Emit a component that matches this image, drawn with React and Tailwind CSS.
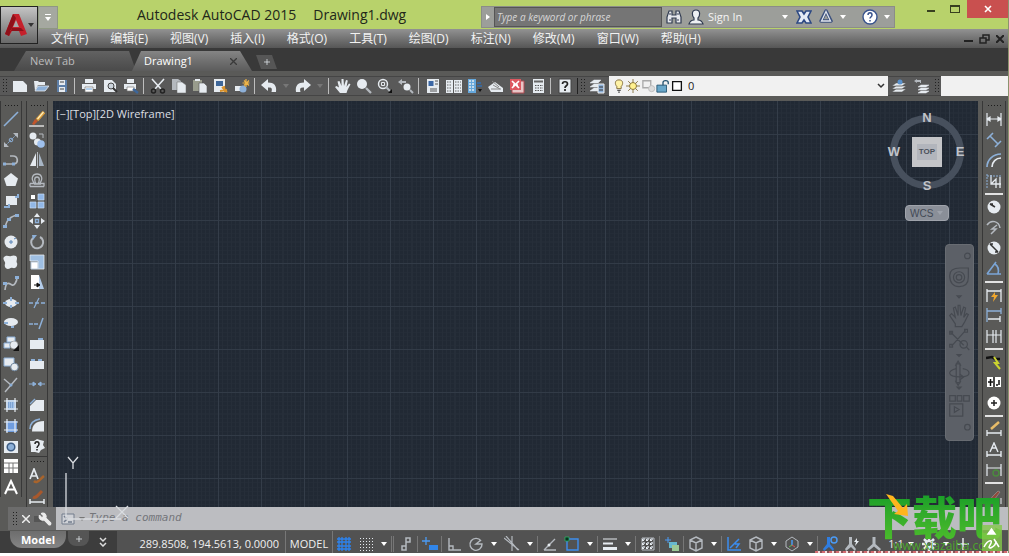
import { useState } from "react"
import { Wrench } from "lucide-react"

const W = "#e6ebf0"
const B = "#8db0d8"
const G = "#b4b9bf"

// drawings on a 16x16 grid
const art = {
  newFile: <path d="M1 3h10l4 4v7H1z" fill={W} />,
  open: <><path d="M1 3h4l1 1h6v3H5l-3 6z" fill={W} /><path d="M5 8h11l-4 5H2z" fill={B} stroke={W} strokeWidth=".8" /></>,
  save: <><path d="M3 2h10v12H3z" fill="#5e7fa8" /><path d="M5 2h6v5H5zM5 9h6v5H5z" fill={W} /><path d="M6 4h4M6 11h4" stroke="#444" /></>,
  print: <><path d="M4 1h8v4H4zM1 6h14v5H1z" fill={W} /><path d="M4 9h8v5H4z" fill="#fff" stroke="#777" strokeWidth=".7" /><path d="M5 11h6" stroke="#67a0d8" /></>,
  preview: <><path d="M2 2h8l4 4v8H2z" fill={W} /><circle cx="9" cy="8" r="3" fill="#ccd4dc" stroke="#444" /><path d="M11 10l4 4" stroke="#333" strokeWidth="2" /></>,
  plot: <><path d="M4 1h7v4H4zM1 6h12v5H1z" fill={W} /><path d="M4 9h7v4H4z" fill="#fff" stroke="#777" strokeWidth=".7" /><path d="M10 11l5 4" stroke="#3d6699" strokeWidth="2.500" /></>,
  cut: <g fill="none"><path d="M2 1l9 10M14 1L5 11" stroke={W} strokeWidth="1.600" /><circle cx="3.500" cy="13" r="2" stroke="#222" strokeWidth="1.500" /><circle cx="12.500" cy="13" r="2" stroke="#222" strokeWidth="1.500" /></g>,
  copy: <><path d="M1 1h6l3 2v9H1z" fill={G} /><path d="M6 4h5l4 3v8H6z" fill={W} stroke="#666" strokeWidth=".5" /></>,
  paste: <><path d="M1 2h9v11H1z" fill="#999c8d" /><path d="M3 1h5v2H3z" fill={W} /><path d="M7 5h5l3 3v7H7z" fill={W} stroke="#555" strokeWidth=".6" /></>,
  match: <><path d="M1 1h11v13H1z" fill={W} /><path d="M3 3h7v5H3z" fill="#3d6699" /><path d="M9 9l5 5M7 13l7-1M11 8l1 6" stroke="#d8922c" strokeWidth="1.800" /></>,
  block: <><path d="M1 8h7v5H1z" fill={W} /><circle cx="9" cy="11" r="3.500" fill={B} /><path d="M12 1v8M8.500 5h7M10 2.500l5 5M15 2.500l-5 5" stroke="#edb347" strokeWidth="1.200" /></>,
  undo: <path d="M0 7l7-6v3.500c6 0 9 3 8 9.500h-4.500c1-4 0-4.500-3.500-4.500V13z" fill={W} />,
  redo: <path d="M16 7L9 1v3.500c-6 0-9 3-8 9.500h4.500c-1-4 0-4.500 3.500-4.500V13z" fill={W} />,
  hand: <path d="M5 15L0 9l1.500-1L4 9.500 2.500 3.500 4.500 3 6.500 8 6.500 1h2L9 8l2-6 1.800.5L11.500 9 14 5.500l1.500.8L12.500 12l-1 3z" fill={W} />,
  zoom: <><circle cx="6" cy="6" r="5" fill={W} /><path d="M10 10l5 5" stroke={G} strokeWidth="2.300" /></>,
  zoomWin: <><circle cx="6" cy="6" r="4.500" fill="#666" stroke={W} strokeWidth="1.400" /><path d="M4.500 4.500h3v3h-3z" fill="none" stroke={W} /><path d="M9 9l4 4" stroke={G} strokeWidth="2" /><path d="M11 15h4v-4z" fill="#111" /></>,
  zoomPrev: <><path d="M0 4l4-3v2h4v2H4v2z" fill={G} /><circle cx="9" cy="9" r="3.500" fill={W} /><path d="M12 12l3 3" stroke={G} strokeWidth="2" /></>,
  props: <><path d="M2 1h12v14H2z" fill={W} /><path d="M3.500 3h5v5h-5z" fill="#3b67a5" /><path d="M10 3h3M10 6h3M5 11h7M5 13h7" stroke="#555" /></>,
  design: <><path d="M0 2h7v13H0zM8 2h8v13H8z" fill={W} /><path d="M1 4h5M1 7h5M1 10h5M9 4h6M9 7h6M9 10h6M1 13h5M9 13h6" stroke="#666" strokeDasharray="1.500 1" /></>,
  palettes: <><path d="M1 1h8v14H1z" fill="#66a8dc" /><path d="M2 3h6M2 6h6M2 9h6M2 12h6" stroke={W} strokeDasharray="2 1" strokeWidth="1.500" /><path d="M10 5h4M10 8h5" stroke="#3c6899" strokeWidth="2" /><path d="M11 11h4l-2 3z" fill="#111" /></>,
  sheet: <><path d="M0 9l7-5 8 6v4H3z" fill={W} /><path d="M3 11h10M5 7l7 4M4 3l7 6" stroke="#888" /></>,
  markup: <><path d="M3 3h12v12H3z" fill="#e8c7c8" stroke="#b04a50" /><path d="M1 1h11v11H1z" fill="#dd5860" /><path d="M3 3l7 7M10 3l-7 7M4 7h5" stroke="#fff" strokeWidth="1.700" /></>,
  calc: <><path d="M3 1h11v14H3z" fill={W} /><path d="M4 3.500h9" stroke="#666" strokeWidth="2" /><path d="M5 7.500h8M5 10h8M5 12.500h8" stroke="#555" strokeDasharray="1.500 1" /></>,
  help: <><path d="M2 1h12v14H2z" fill={W} stroke="#444" /><path d="M5.500 6c0-3 5-3 5 0 0 2-2.500 1.500-2.500 4M8 11v2" stroke="#222" strokeWidth="1.700" fill="none" /></>,
  layers: <><path d="M1 5l4-3h7l-3 3zM1 9l4-3h4v3zM1 13l4-3h4v3z" fill={W} stroke={W} strokeWidth=".5" /><path d="M9 6h6v9H9z" fill={B} stroke="#eee" /><path d="M10 9h4M10 12h4" stroke="#333" /></>,
  layerState: <><path d="M1 14l4-3h10l-4 3zM1 11l4-3h10l-4 3zM1 8l4-3h10l-4 3z" fill={W} stroke="#555" strokeWidth=".5" /><circle cx="9" cy="4" r="2.500" fill="#5b92cc" /></>,
  layerPrev: <><path d="M5 15l3-2h8l-3 2zM5 12l3-2h8l-3 2zM5 9l3-2h8l-3 2z" fill={W} stroke={W} strokeWidth=".5" /><path d="M1 3l3-2v1h4v3H7V4H4v1z" fill={G} /></>,
  bulb: <><path d="M8 1c-5 0-5 5-2.500 7.500V11h5V8.500C13 6 13 1 8 1z" fill="#fff3a7" stroke="#77612c" /><path d="M6 13h4M7 15h2" stroke="#555" strokeWidth="1.500" /></>,
  sun: <><path d="M8 0v16M0 8h16M2.500 2.500l11 11M13.500 2.500l-11 11" stroke="#806c35" /><circle cx="8" cy="8" r="4" fill="#fff08e" stroke="#806c35" /></>,
  vp: <><path d="M1 2h9v8H1z" fill="none" stroke="#aaa" strokeWidth="1.500" /><circle cx="11" cy="11" r="3.500" fill="#ddd" stroke="#bbb" /></>,
  lock: <><path d="M1 7h11v8H1z" fill="#69a7c9" stroke="#24536f" /><path d="M8 7V4c0-3 6-3 6 0v2" fill="none" stroke="#24536f" strokeWidth="1.500" /></>,
  swatch: <path d="M3 3h10v10H3z" fill="#fff" stroke="#111" strokeWidth="1.500" />,

  line: <path d="M1 15L15 1" stroke={B} strokeWidth="1.600" />,
  xline: <><path d="M3 13L13 3" stroke={B} strokeDasharray="2 1" /><path d="M1 15v-5l5 5zM15 1v5l-5-5z" fill={G} /><circle cx="8" cy="8" r="1.800" fill="none" stroke={B} /></>,
  pline: <><path d="M2 12h9c5-1 4-8-1-8H7" fill="none" stroke={G} strokeWidth="1.700" /><path d="M0 10.500h3v3H0zM9 10.500h3v3H9z" fill={B} /></>,
  polygon: <path d="M8 1l7 5.500L12.500 14h-9L1 6.500z" fill={W} />,
  rect: <><path d="M3 3h11v9H3z" fill={W} /><path d="M1 14h5v-3M12 4h3V1" stroke={B} strokeWidth="2" fill="none" /></>,
  arc: <><path d="M2 15C3 8 7 3 15 2" fill="none" stroke={G} strokeWidth="1.500" /><path d="M0 12h4v3H0zM12 1h4v3h-4zM4 5h4v3H4z" fill={B} /></>,
  circle: <><circle cx="8" cy="8" r="6.500" fill={W} /><path d="M6 8h4M8 6v4M11 5l2-1" stroke="#5683b7" /></>,
  cloud: <path d="M1 3c3-3 5 0 7-1s6-1 6 2-1 3 0 5-1 6-4 5-3 1-5 1-4-2-3-5-3-4-1-7z" fill={W} />,
  spline: <><path d="M2 15c1-10 5-6 7-5s5-3 5-8" fill="none" stroke={G} strokeWidth="1.700" /><path d="M0 7h4v3H0zM12 1h4v3h-4z" fill={B} /></>,
  ellipse: <><ellipse cx="8" cy="8" rx="6" ry="4" fill={W} /><path d="M8 2v4M0 8h4M12 8h4M8 10v3" stroke={B} strokeWidth="2" /></>,
  ellArc: <><ellipse cx="8" cy="7" rx="7" ry="4" fill={W} /><path d="M1 8h4M8 12h3" stroke={B} strokeWidth="2" /></>,
  insert: <><path d="M1 7h6v5H1zM4 1h8v5H4z" fill={W} stroke={B} /><circle cx="11" cy="9" r="4" fill={W} stroke="#777" strokeWidth=".5" /><path d="M10 15h6v-6z" fill="#111" /></>,
  mkBlock: <><path d="M1 2h10v8H1z" fill={W} stroke={B} /><circle cx="11.500" cy="11" r="3.800" fill={W} stroke="#71879f" /></>,
  point: <><path d="M1 2l7 6M8 8l6-7M8 8l-6 7" stroke={G} strokeWidth="1.500" /><circle cx="8" cy="8" r="1.500" fill={B} /></>,
  hatch: <><path d="M3 3h10v10H3z" fill="#9dbfe8" /><path d="M5 6h7M5 8h7M5 10h7" stroke="#5d86bd" strokeDasharray="1 1" /><path d="M4 1v14M12 1v14M1 4h14M1 12h14" stroke={W} strokeWidth="1.200" /></>,
  gradient: <><path d="M3 3h11v11H3z" fill="#6f9de0" /><path d="M4 1v14M12 1v14M1 4h14M1 12h14" stroke={W} strokeWidth="1.200" /></>,
  region: <><path d="M1 3h14v12H1z" fill={W} /><circle cx="8" cy="9" r="3.800" fill="#8db0d8" stroke="#3d5c83" strokeWidth="1.500" /></>,
  table: <><path d="M1 1h14v14H1z" fill="#fff" /><path d="M1 5h14M1 10h14M6 5v10M10 5v10" stroke="#777" /></>,
  mtext: <path d="M2 15L8 2l6 13M4.500 10.500h7" stroke="#fff" strokeWidth="2" fill="none" />,

  erase: <><path d="M0 15h15" stroke="#fff" strokeWidth="1.200" /><path d="M3 13l3-5 3 2-4 4z" fill="#c2562b" /><path d="M8 9l7-8" stroke="#d89b3b" strokeWidth="3.500" /><path d="M8.500 8l6-7" stroke="#fff0bd" strokeWidth="1.200" /></>,
  copyObj: <><circle cx="4" cy="4" r="3.500" fill={W} /><circle cx="8.500" cy="10" r="3.500" fill={W} /><circle cx="12" cy="12" r="3.800" fill="#9fc0ec" /><path d="M10 2h4v4" stroke={G} fill="none" /></>,
  mirror: <><path d="M7 1v13H1z" fill={W} /><path d="M10 1v13h5z" fill="#a8b6c5" /><path d="M8.500 0v16" stroke={G} /></>,
  offset: <path d="M1 14.500h14M1 11.500h4.500C1 6 4 2 8 2s7 4 2.500 9.500H15v3M1 11.500v3M5 12h2.500C5 9 5 5 8 5s3 4 .5 7H12" stroke={G} strokeWidth="1.300" fill="none" />,
  array: <><path d="M2 2h4v4H2z" fill="#fff" /><path d="M9 1h6v6H9zM1 9h6v6H1zM9 9h6v6H9z" fill="#91b7e6" stroke="#c9dcf4" strokeWidth=".7" /></>,
  move: <><path d="M8 0l3 4H5zM8 16l3-4H5zM0 8l4-3v6zM16 8l-4-3v6z" fill={W} /><path d="M6.500 6.500h3v3h-3z" fill="none" stroke={B} strokeWidth="1.300" /></>,
  rotate: <><path d="M4 4a6 6 0 1 0 7-1" fill="none" stroke={G} strokeWidth="2" /><path d="M3 1h5L4 6z" fill={B} /></>,
  scale: <><path d="M1 1h14v14H9V7H1z" fill="#9fbfe2" stroke={W} strokeWidth=".8" /><path d="M2 8h7v7H2z" fill="#fff" stroke="#bcd" /></>,
  stretch: <><path d="M2 1h8v14H2z" fill="#fff" /><path d="M10 1l5 14h-5z" fill="#b3cbe8" /><path d="M5 11h5M8 9l3 2-3 2z" stroke="#111" fill="#111" /></>,
  trim: <><path d="M0 8h16" stroke={B} strokeDasharray="4 2" strokeWidth="1.300" /><path d="M5 13l5-10" stroke={B} strokeWidth="1.300" /></>,
  extend: <><path d="M0 9h10" stroke={B} strokeDasharray="4 1" strokeWidth="1.300" /><path d="M10 14l4-11" stroke={B} strokeWidth="1.500" /></>,
  breakAt: <><path d="M1 4h14v9H1z" fill={W} /><path d="M9 3h5" stroke={B} strokeWidth="2" /></>,
  breakObj: <><path d="M1 5h14v8H1z" fill={W} /><path d="M2 3h4v2H2zM9 3h4v2H9z" fill={B} /></>,
  join: <path d="M0 8h5M11 8h5M4 6l3 2-3 2zM12 6L9 8l3 2z" stroke={B} fill={B} />,
  chamfer: <><path d="M1 14V9l6-6h8v11z" fill={W} /><path d="M1 7l5-5" stroke={B} strokeWidth="1.500" /></>,
  fillet: <><path d="M3 14.500C3 8 7 4 15 4v10.500z" fill={W} /><path d="M1 12c0-6 4-9 10-10" fill="none" stroke={B} strokeWidth="1.600" /></>,
  explode: <><path d="M1 3l4 0 3-2 3 1 4 1-1 4 2 3-4 2-2 3-4-1-4 0 0-5z" fill={W} /><path d="M6 6c0-3 4-3 4 0 0 2-2 2-2 4M8 11v1.500" stroke="#222" strokeWidth="1.500" fill="none" /></>,
  textEdit: <><path d="M1 11L5 1l4 10M3 8h4" stroke={W} strokeWidth="1.700" fill="none" /><path d="M5 13c3 3 5-1 10-5" stroke="#a8642c" strokeWidth="2.500" fill="none" /></>,
  dimEdit: <><path d="M1 10v5M15 10v5M1 13h14" stroke={W} strokeWidth="1.500" /><path d="M4 8c3 2 5-2 9-6" stroke="#a8582c" strokeWidth="3" fill="none" /></>,

  dimLin: <path d="M1 2v13M15 2v13M1 8h14M1 8l3-2v4zM15 8l-3-2v4z" stroke={W} strokeWidth="1.200" fill={W} />,
  dimAl: <path d="M1 7l6-6M9 15l6-6M4 4l8 8" stroke={B} strokeWidth="1.600" />,
  dimArc: <><path d="M1 15C1 8 7 2 15 2" stroke={B} strokeWidth="1.700" fill="none" /><path d="M6 15c0-5 4-9 9-9" stroke={W} strokeWidth="1.700" fill="none" /></>,
  dimOrd: <><path d="M5 2v9h10M5 11l5-5 0 9M14 4v11" stroke={W} strokeWidth="1.300" fill="none" /><path d="M1 1v14M1 3h14" stroke={B} strokeDasharray="2 1" fill="none" /></>,
  radius: <><circle cx="8" cy="8" r="6.500" fill={W} /><path d="M9 8L4 5M4 5h3" stroke="#333" strokeWidth="1.500" /></>,
  jog: <path d="M1 6c4-6 12-4 13 3M5 15l5-5h-4l5-4" stroke={G} strokeWidth="1.500" fill="none" />,
  diam: <><circle cx="8" cy="8" r="6.500" fill={W} /><path d="M4 4l8 8M4 4h3M12 12H9" stroke="#333" strokeWidth="1.500" /></>,
  angle: <path d="M1 14L10 2M1 14h14M9 4c3 2 4 6 3 10" stroke="#7ba5d6" strokeWidth="1.600" fill="none" />,
  quick: <><path d="M1 2v13M15 2v13M1 4h14" stroke={W} strokeWidth="1.300" /><path d="M9 5l-4 5h3l-1 5 5-7H9z" fill="#efa62d" /></>,
  base: <><path d="M1 1v14M15 1v6M1 4h14" stroke={B} strokeWidth="1.300" /><path d="M14 9v6M2 12h12" stroke={W} strokeWidth="1.300" /></>,
  cont: <path d="M1 2v13M7 2v13M10 2v13M15 2v13M1 7h14" stroke={W} strokeWidth="1.200" />,
  brk: <><path d="M0 4l6-1 3 2h5" stroke="#111" strokeWidth="2.500" fill="none" /><path d="M8 3l4 6-3 0 5 6" stroke="#cbd32f" strokeWidth="2" fill="none" /></>,
  tol: <><path d="M1 3h14v10H1z" fill="#fff" /><path d="M8 3v10M2 8h5M4.500 5v7M10 11h2M13 6v5" stroke="#111" strokeWidth="1.500" /></>,
  centre: <><circle cx="8" cy="8" r="6.500" fill="#fff" /><path d="M8 5v6M5 8h6" stroke="#222" strokeWidth="1.500" /></>,
  pen: <><path d="M1 9v6M15 9v6M1 12h14" stroke={W} strokeWidth="1.300" /><path d="M5 8l8-7" stroke="#e8bc68" strokeWidth="2.500" /></>,
  dimText: <path d="M1 9v6M15 9v6M1 13h14M4 10l4-9 4 9M6 6h4" stroke={W} strokeWidth="1.400" fill="none" />,
  update: <><path d="M1 2v12M15 2v12M1 6h14" stroke={W} strokeWidth="1.200" /><circle cx="10" cy="11" r="3" fill="none" stroke="#4b8a3e" strokeWidth="1.500" /></>,
  brush: <><path d="M1 9v6M15 9v6" stroke={W} /><path d="M3 13l5-2 6-8-2-1-6 6z" fill="#8f4a3c" stroke="#aaa" strokeWidth=".5" /></>,

  grid: <path d="M3 1v14M6 1v14M10 1v14M13 1v14M1 3h14M1 6h14M1 10h14M1 13h14" stroke="#2c83ee" strokeWidth="1.300" />,
  dots: <path d="M2 2.500h13M2 5.500h13M2 8.500h13M2 11.500h13M2 14.500h13" stroke={W} strokeDasharray="1 2" />,
  infer: <path d="M8 10V2h4v4H8M4 10h4v4H4z" stroke={G} strokeWidth="1.500" fill="none" />,
  dyn: <><path d="M4 1v8M0 5h8" stroke="#4b9bf5" strokeWidth="1.300" /><path d="M7 9h9v5H7z" fill="#3186ea" /></>,
  ortho: <path d="M3 2v12h12M3 10h4v4" stroke={G} strokeWidth="1.400" fill="none" />,
  polar: <path d="M13 5a6 6 0 1 0 1 3H8l5-4" stroke={G} strokeWidth="1.400" fill="none" />,
  iso: <path d="M0 2l15 12M8 0v15M2 0l12 14" stroke={G} strokeWidth="1.200" />,
  track: <><path d="M2 14L13 3M2 14h12" stroke={G} strokeWidth="1.400" /><circle cx="7" cy="9" r="1.500" fill={W} /></>,
  osnap: <><path d="M3 3h11v11H3z" fill="none" stroke="#3e8eee" strokeWidth="1.400" /><path d="M1 1h4v4H1z" fill="#08351f" stroke="#2fae65" strokeWidth=".8" /></>,
  lwt: <><path d="M1 3h14" stroke={W} /><path d="M1 7.500h10" stroke={W} strokeWidth="2" /><path d="M1 12.500h14" stroke={W} strokeWidth="3" /></>,
  trans: <><path d="M2 2h12v12H2z" fill="none" stroke={G} /><path d="M2 4h12M2 8h12M2 12h12" stroke={W} strokeWidth="2" strokeDasharray="2 2" /><path d="M4 2v12M8 2v12M12 2v12" stroke={G} strokeWidth="2" strokeDasharray="2 2" /></>,
  cycle: <><path d="M4 1v6M1 4h6" stroke="#4b9bf5" /><path d="M5 6h8v6H5z" fill="#67b9cf" /><path d="M8 9h7v6H8z" fill="#9cc996" /></>,
  cube: <path d="M8 1l6 3v8l-6 3-6-3V4zM2 4l6 3 6-3M8 7v8" stroke={G} strokeWidth="1.400" fill="none" />,
  ducs: <path d="M2 1v13h13M4 12l9-9M9 8h4l-3 4" stroke="#3b8df0" strokeWidth="1.500" fill="none" />,
  filter: <><path d="M8 1l6 4v6l-6 4-6-4V5z" stroke={G} fill="none" /><path d="M8 4v5" stroke="#4b9bf5" strokeWidth="1.500" /><path d="M8 9l3 2" stroke="#db5555" /><path d="M8 9l-3 2" stroke="#65b957" /></>,
  anno: <path d="M6.500 1v7L1 13l1.500 2L8 10.500l5.500 4.500L15 13 9.500 8V1z" fill={G} />,
  annoBlue: <><path d="M5 1v7L1 13l1 2 5-4 4 4 1-2-4-5V1z" fill="#2f7de0" /><circle cx="12" cy="4" r="3" fill="none" stroke="#4b9bf5" strokeWidth="1.500" /></>,
  annoAuto: <><path d="M5 1v7L1 13l1 2 5-4 4 4 1-2-4-5V1z" fill={G} /><path d="M13 2l-3 4h2l-1 4 4-5h-2z" fill={W} /></>,
  gear: <><path d="M8 1v14M1 8h14M3 3l10 10M13 3L3 13" stroke={W} strokeWidth="2.500" /><circle cx="8" cy="8" r="4" fill={W} /><circle cx="8" cy="8" r="2" fill="#555" /></>,
  plus: <path d="M8 2v12M2 8h12" stroke={W} strokeWidth="1.500" />,

  binoculars: <><path d="M1 14V8l2-6h3v4h4V2h3l2 6v6h-5V9H6v5z" fill="#e7e9ed" stroke="#303b50" strokeWidth="1.200" /><path d="M3 11h2M11 11h2M3 5h2M11 5h2" stroke="#303b50" /></>,
  user: <path d="M8 1c-5 0-4 6-2 8v2c-3 0-4 1-5 4h14c-1-3-2-4-5-4V9c2-2 3-8-2-8z" fill="#edf0f3" stroke="#303b50" strokeWidth="1.200" />,
  exchange: <path d="M1 2h5l2 3 2-3h5l-3 6 3 6h-5l-2-3-2 3H1l3-6z" fill="#e4eaf5" stroke="#2d4984" strokeWidth="1.600" />,
  a360: <><path d="M8 2l5 10H3z" fill="none" stroke="#3c517d" strokeWidth="3.500" strokeLinejoin="round" /><path d="M8 2.500L12.500 12h-9z" fill="none" stroke="#e1e5ec" strokeWidth="1.300" /></>,
  info: <><circle cx="8" cy="8" r="7" fill="#fff" stroke="#38538d" strokeWidth="1.400" /><path d="M6 6c0-3 4-3 4 0 0 2-2 2-2 3.500M8 11v1.500" stroke="#38538d" strokeWidth="1.500" fill="none" /></>,
}

function Icon({ name, className = "size-4" }) {
  return <svg viewBox="0 0 16 16" className={`${className} shrink-0`} aria-hidden="true">{art[name]}</svg>
}

const menus = ["文件(F)", "编辑(E)", "视图(V)", "插入(I)", "格式(O)", "工具(T)", "绘图(D)", "标注(N)", "修改(M)", "窗口(W)", "帮助(H)"]

const standardBar = ["newFile", "open", "save", "|", "print", "preview", "plot", "|", "cut", "copy", "paste", "match", "block", "|", "undo", "v", "redo", "v", "|", "hand", "zoom", "zoomWin", "zoomPrev", "|", "props", "design", "palettes", "sheet", "markup", "calc", "|", "help"]
const drawTools = ["line", "xline", "pline", "polygon", "rect", "arc", "circle", "cloud", "spline", "ellipse", "ellArc", "insert", "mkBlock", "point", "hatch", "gradient", "region", "table", "mtext"]
const modifyTools = ["erase", "copyObj", "mirror", "offset", "array", "move", "rotate", "scale", "stretch", "trim", "extend", "breakAt", "breakObj", "join", "chamfer", "fillet", "explode"]
const dimTools = ["dimLin", "dimAl", "dimArc", "dimOrd", "|", "radius", "jog", "diam", "angle", "|", "quick", "base", "cont", "|", "brk", "tol", "centre", "|", "pen", "dimText", "update", "|", "brush"]
const statusTools = ["grid", "dots", "v", "|", "|", "infer", "|", "dyn", "|", "ortho", "polar", "v", "iso", "v", "|", "track", "osnap", "v", "|", "lwt", "v", "|", "trans", "|", "cycle", "|", "cube", "v", "|", "ducs", "cube", "v", "filter", "v", "|", "annoBlue", "annoAuto", "anno"]

function Caret({ className = "text-white" }) {
  return <svg viewBox="0 0 6 4" className={`h-1 w-1.5 shrink-0 ${className}`} aria-hidden="true"><path d="M0 0h6L3 4z" fill="currentColor" /></svg>
}

function Grip({ vertical }) {
  return vertical
    ? <div className="h-4 w-[5px] shrink-0 bg-[radial-gradient(#222_40%,transparent_45%)] bg-[size:3px_3px]" />
    : <div className="mx-auto mt-[3px] mb-0.5 h-[3px] w-3.5 shrink-0 bg-[radial-gradient(#1c1c1c_40%,transparent_45%)] bg-[size:3px_3px]" />
}

function Palette({ tools, className }) {
  return (
    <div className={`flex min-h-0 flex-col border-x border-[#383838] bg-[#5a5a58] ${className}`}>
      <Grip />
      {tools.map((t, i) => t === "|"
        ? <div key={i} className="mx-0.5 my-0.5 h-0.5 shrink-0 bg-[#e2e2e2]" />
        : <button key={i} aria-label={t} className="flex min-h-0 flex-1 items-center justify-center hover:bg-white/20"><Icon name={t} /></button>)}
    </div>
  )
}

function TitleBar() {
  return (
    <div className="flex h-[29px] items-start bg-[#b8d26b] pl-[38px]">
      <button aria-label="Customize" className="mt-1.5 flex h-[23px] w-5 flex-col items-center justify-center gap-0.5 border border-[#8f9883] bg-[#a5a8a0]">
        <span className="h-px w-1.5 bg-white"></span>
        <Caret />
      </button>
      <h1 className="ml-[79px] flex gap-[17px] whitespace-nowrap text-[14px] leading-[29px] text-[#22271a]">
        <span>Autodesk AutoCAD 2015</span>
        <span>Drawing1.dwg</span>
      </h1>
      <div className="ml-auto mt-1.5 flex h-[22px] w-[414px] items-center border border-[#8b8d88] bg-[#9c9e9a] text-[#f4f4f4]">
        <button aria-label="Collapse" className="flex h-full w-3 items-center justify-center"><Caret className="-rotate-90 text-white" /></button>
        <input aria-label="Search" placeholder="Type a keyword or phrase" className="h-5 w-[168px] border border-[#555] bg-[#757575] px-0.5 text-[10px] italic outline-none placeholder:text-[#d6d6d6]" />
        <button aria-label="Find" className="ml-1 flex"><Icon name="binoculars" /></button>
        <button className="ml-1.5 flex items-center gap-1 text-[11px]"><Icon name="user" />Sign In</button>
        <button aria-label="Account" className="ml-auto mr-2"><Caret /></button>
        <button aria-label="Exchange"><Icon name="exchange" /></button>
        <button aria-label="A360" className="ml-1.5 flex items-center gap-1.5"><Icon name="a360" /><Caret /></button>
        <button aria-label="Help" className="mr-1 ml-4 flex items-center gap-1.5"><Icon name="info" /><Caret /></button>
      </div>
      <div className="ml-6 flex">
        <button aria-label="Minimize" className="flex h-[18px] w-6 items-center justify-center"><span className="mt-1 h-0.5 w-2 bg-[#38401f]"></span></button>
        <button aria-label="Maximize" className="flex h-[18px] w-6 items-center justify-center"><span className="h-2 w-2.5 border border-t-2 border-[#38401f]"></span></button>
        <button aria-label="Close" className="flex h-[18px] w-[41px] items-center justify-center bg-[#c9504f]">
          <svg viewBox="0 0 8 8" className="size-2"><path d="M1 1l6 6M7 1L1 7" stroke="#fff" strokeWidth="1.600" /></svg>
        </button>
      </div>
    </div>
  )
}

function ViewCube() {
  return (
    <div className="absolute right-2.5 top-[9px] w-[82px]">
      <div className="relative grid h-[84px] grid-cols-[16px_1fr_16px] grid-rows-[16px_1fr_16px] place-items-center font-['Liberation_Sans',sans-serif] text-[13px] font-bold text-[#c0c3c9]">
        <div className="absolute inset-x-1 inset-y-[5px] rounded-full border-[7px] border-[#47505d]"></div>
        <span className="relative col-start-2">N</span>
        <span className="relative row-start-2">W</span>
        <button className="relative row-start-2 flex size-[30px] items-center justify-center bg-[#c4c5c8] text-[8px] text-[#4a505a]"><span className="bg-[#b2b5bc] px-0.5 py-1 leading-2">TOP</span></button>
        <span className="relative row-start-2">E</span>
        <span className="relative col-start-2 row-start-3">S</span>
      </div>
      <button className="mx-auto mt-[11px] flex h-4 w-11 items-center gap-1 rounded-sm border border-[#a0a4ac] bg-[#8a8f98] px-1 font-['Liberation_Sans',sans-serif] text-[10px] text-[#424955]">WCS<Caret className="text-[#9da2ab]" /></button>
    </div>
  )
}

function NavBar() {
  return (
    <div className="absolute right-1 top-[143px] flex h-[197px] w-[29px] flex-col items-center justify-between rounded-sm border border-[#686c72] bg-[#5c6067] py-1 text-[#454950]">
      <svg viewBox="0 0 29 190" className="h-full w-full" fill="none" stroke="#464a51" strokeWidth="1.300">
        <circle cx="23" cy="2" r="3" />
        <path d="M4 23c0-6 5-8 11-8h9v10c0 7-4 10-10 10S4 31 4 23z" /><circle cx="14" cy="25" r="6" /><circle cx="14" cy="25" r="3" />
        <path d="M12 45h4l-2 2z M12 108h4l-2 2z M12 143h4l-2 2z" />
        <path d="M10 75l-6-9 2-2 4 4-2-10 2-1 3 9 0-11h2l1 11 3-9 2 1-2 10 3-4 2 1-4 8-3 5h-7z" />
        <path d="M5 84l14 14M21 82L6 99M4 83h3v3H4zM20 81h3v3h-3zM4 97h3v3H4z" /><circle cx="19" cy="97" r="4" /><path d="M22 100l3 3" />
        <path d="M11 118h4v20h-4zM10 120l3-5 3 5M10 136l3 5 3-5" /><path d="M11 123c-10 2-10 9 4 9s11-8 3-9M15 129l4 3-4 3" />
        <path d="M4 152h6v6H4zM12 152h5v6h-5zM19 152h6v6h-6zM4 161h14v13H4zM9 164l5 3-5 3z" /><circle cx="23" cy="186" r="3" />
      </svg>
    </div>
  )
}

function Canvas() {
  return (
    <main className="relative min-w-0 flex-1 bg-[#212934] bg-[linear-gradient(to_right,#343d49_1px,transparent_1px),linear-gradient(#323b47_1px,transparent_1px),repeating-linear-gradient(to_right,#262e39_0_1px,transparent_1px_10%),repeating-linear-gradient(#242c37_0_1px,transparent_1px_10%)] bg-[size:43px_43px] bg-[position:36px_33px]">
      <p className="px-[3px] pt-1 text-[11px] leading-[18px] text-[#dcdfe3]">[−][Top][2D Wireframe]</p>
      <ViewCube />
      <NavBar />
      <svg viewBox="0 0 80 72" className="absolute -bottom-4 left-2 z-10 h-[72px] w-20" fill="none" stroke="#d9dce0" strokeWidth="1.300" aria-hidden="true">
        <path d="M5 22v46h55M7 6l5 6 5-6M12 12v6M55 55l12 12M67 55L55 67" />
      </svg>
    </main>
  )
}

function App() {
  const [tab, setTab] = useState("Drawing1")
  const [command, setCommand] = useState("")

  return (
    <div className="bg-white pb-[3px] font-['Open_Sans','Noto_Sans_CJK_SC',sans-serif]">
      <div className="relative flex h-[calc(100vh-3px)] min-h-[480px] flex-col overflow-hidden border-r border-[#8b936e] bg-[#5a5a58]">
        <TitleBar />
        <button aria-label="Application menu" className="absolute left-0 top-1.5 flex h-[38px] w-[38px] items-center border border-[#222] bg-linear-to-b from-[#c4c4c4] to-[#696969] pl-[3px]">
          <svg viewBox="0 0 24 26" className="h-[26px] w-6">
            <path d="M9 2h6l8 20-6 2-2-5H8l-3 5-4-2z" fill="#c5202b" />
            <path d="M12 8l3 7H9z" fill="#aaa" />
            <path d="M9 2L1 22l4 2 7-18zM8 16h9l3 3H6z" fill="#8f1019" />
          </svg>
          <Caret className="text-[#333]" />
        </button>

        <nav className="flex h-[19px] shrink-0 items-center gap-[22px] bg-linear-to-b from-[#929292] to-[#565656] pl-[51px] text-[12px] leading-[18px] text-[#f2f2f2]">
          {menus.map((m) => <button key={m} className="whitespace-nowrap">{m}</button>)}
          <div className="ml-auto mr-1 flex items-center gap-1.5 text-[#202020]">
            <button aria-label="Minimize drawing"><span className="mt-1 block h-0.5 w-[9px] bg-[#222]"></span></button>
            <button aria-label="Restore drawing"><svg viewBox="0 0 11 10" className="h-2.5 w-[11px]" fill="none" stroke="#222" strokeWidth="1.500"><path d="M1 4h6v5H1zM4 4V1h6v5H7" /></svg></button>
            <button aria-label="Close drawing"><svg viewBox="0 0 8 8" className="size-2" stroke="#222" strokeWidth="2"><path d="M0 0l8 8M8 0L0 8" /></svg></button>
          </div>
        </nav>

        <div className="flex h-[23px] shrink-0 items-end bg-[#393939] pl-3.5 text-[11px]">
          <button onClick={() => setTab("New Tab")} className="h-5 w-[122px] bg-linear-to-b from-[#626262] to-[#4a4a4a] pl-4 text-left text-[#bcbcbc] [clip-path:polygon(12px_0,115px_0,122px_100%,0_100%)]">New Tab</button>
          <button onClick={() => setTab("Drawing1")} className="-ml-1 flex h-5 w-[120px] items-center justify-between bg-linear-to-b from-[#858585] to-[#5c5c5c] pl-3 pr-[15px] text-white [clip-path:polygon(9px_0,108px_0,120px_100%,0_100%)]">
            {tab === "Drawing1" ? "Drawing1" : tab}
            <svg viewBox="0 0 8 8" className="size-[7px]" stroke="#3a3a3a" strokeWidth="1.500"><path d="M0 0l8 8M8 0L0 8" /></svg>
          </button>
          <button aria-label="New drawing" className="ml-1 mb-0.5 flex h-3.5 w-[21px] items-center justify-center bg-[#565656] [clip-path:polygon(0_0,16px_0,21px_100%,5px_100%)]"><Icon name="plus" className="size-2" /></button>
        </div>

        <div className="my-[5px] flex h-5 shrink-0 items-center border-y border-[#454545] bg-[#595959]">
          <div className="px-0.5"><Grip vertical /></div>
          {standardBar.map((t, i) => {
            if (t === "|") return <div key={i} className="mr-[3px] ml-0.5 h-4 w-px bg-[#bdbdbd]" />
            if (t === "v") return <div key={i} className="flex w-[13px] justify-center"><Caret className="text-[#777]" /></div>
            return <button key={i} aria-label={t} className="flex w-[21px] justify-center"><Icon name={t} /></button>
          })}
          <div className="ml-0.5 flex border-l border-[#222] pl-0.5"><Grip vertical /></div>
          <button aria-label="Layer properties" className="flex w-6 justify-center"><Icon name="layers" /></button>
          <div className="relative flex h-5 min-w-0 flex-1 items-center bg-[#f1f1f1] pl-[3px] text-[#222]">
            <Icon name="bulb" className="size-3.5" /><Icon name="sun" className="size-3.5" /><span className="ml-0.5 flex"><Icon name="vp" className="size-3.5" /><Icon name="lock" className="size-3.5" /></span><Icon name="swatch" className="size-3.5" />
            <select aria-label="Layer" className="h-full min-w-0 flex-1 appearance-none bg-transparent pl-1 text-[11px] outline-none"><option>0</option></select>
            <svg viewBox="0 0 8 6" className="pointer-events-none absolute right-[3px] h-1.5 w-2" fill="none" stroke="#333" strokeWidth="1.500"><path d="M1 1l3 3 3-3" /></svg>
          </div>
          <button aria-label="Layer states" className="flex w-[22px] justify-center"><Icon name="layerState" /></button>
          <button aria-label="Layer previous" className="flex w-[22px] justify-center"><Icon name="layerPrev" /></button>
          <div className="px-0.5"><Grip vertical /></div>
          <input aria-label="Color" className="h-5 w-[67px] bg-[#f1f1f1] outline-none" />
        </div>

        <div className="flex min-h-0 flex-1">
          <Palette tools={drawTools} className="mb-2.5 mr-1 w-[22px]" />
          <div className="mr-[5px] flex w-[22px] flex-col">
            <Palette tools={modifyTools} className="flex-1" />
            <Palette tools={["textEdit", "dimEdit"]} className="h-[51px] border-t" />
          </div>
          <Canvas />
          <Palette tools={dimTools} className="ml-1 mr-0.5 w-6" />
        </div>

        <div className="flex h-6 shrink-0 items-stretch bg-[#5a5a58] pl-2 pb-px">
          <div className="flex w-12 items-center justify-between bg-[#6c6c6c] px-1">
            <Grip vertical />
            <button aria-label="Close command line"><svg viewBox="0 0 8 8" className="size-2" stroke="#eee" strokeWidth="1.500"><path d="M0 0l8 8M8 0L0 8" /></svg></button>
            <button aria-label="Customize command line" className="flex items-center"><span className="-mr-1 h-1.5 w-2 bg-[#555]"></span><Wrench className="size-3.5 -scale-x-100 fill-[#ececec] text-[#ececec]" /></button>
          </div>
          <label className="flex min-w-0 flex-1 items-center gap-1 bg-[#bcbdc1] pl-[5px]">
            <svg viewBox="0 0 14 12" className="h-3 w-3.5" fill="none" stroke="#737c8c"><path d="M1 1h12v10H1z" fill="#cfd1d6" /><path d="M3 3l3 3-3 3M7 9h4" strokeWidth="1.500" /></svg>
            <Caret className="text-[#777]" />
            <input value={command} onChange={(e) => setCommand(e.target.value)} aria-label="Command" placeholder="Type a command" className="min-w-0 flex-1 bg-transparent font-['DejaVu_Sans_Mono',monospace] text-[11px] italic outline-none placeholder:text-[#74767b]" />
          </label>
        </div>

        <footer className="flex h-[22px] shrink-0 items-stretch whitespace-nowrap bg-[#525252] text-[11px] text-[#f0f0f0]">
          <div className="flex w-[117px] items-start bg-[#3d3d3d] pl-2.5">
            <button className="h-[17px] w-[56px] rounded-b-xl bg-linear-to-b from-[#6d6d6d] to-[#858585] font-bold leading-[16px] text-white">Model</button>
            <button aria-label="New layout" className="ml-0.5 flex h-[15px] w-[21px] items-center justify-center rounded-b-lg bg-[#555]"><Icon name="plus" className="size-2" /></button>
            <button aria-label="More layouts" className="ml-2.5 mt-1.5"><svg viewBox="0 0 8 10" className="h-2.5 w-2" fill="none" stroke="#ddd" strokeWidth="1.500"><path d="M1 1l3 3 3-3M1 6l3 3 3-3" /></svg></button>
          </div>
          <span className="w-[169px] border-r border-[#777] pr-1.5 text-right leading-[26px]">289.8508, 194.5613, 0.0000</span>
          <button className="w-[47px] border-r border-[#777] leading-[26px]">MODEL</button>
          <div className="flex items-center pt-1">
            {statusTools.map((t, i) => {
              if (t === "|") return <div key={i} className="mr-px h-4 w-px bg-[#777]" />
              if (t === "v") return <div key={i} className="flex w-3.5 justify-center"><Caret /></div>
              return <button key={i} aria-label={t} className="flex w-[22px] justify-center"><Icon name={t} /></button>
            })}
            <button className="flex w-8 items-center justify-center gap-1">1:1<Caret /></button>
            <button aria-label="Workspace" className="ml-1 flex items-center gap-1.5"><Icon name="gear" /><Caret /></button>
            <button aria-label="Monitor" className="ml-1.5"><Icon name="plus" /></button>
          </div>
        </footer>

        <div className="absolute bottom-0 right-0 z-20 w-[141px] font-['Noto_Sans_CJK_SC',sans-serif]">
          <p className="bg-linear-to-b from-[#0d9c28] to-[#4dbd2c] bg-clip-text text-[45px] font-black leading-[54px] text-transparent">下载吧</p>
          <svg viewBox="0 0 24 24" className="absolute left-[18px] top-1 size-6"><path d="M1 1l7 2 10 12 4-4 1 12-14-2 4-3z" fill="#ffb51e" /></svg>
          <p className="-mt-1 pl-[26px] font-['Open_Sans',sans-serif] text-[12px] leading-[14px] text-[#4da52c]">www.xiazaiba.com</p>
          <div className="absolute bottom-0.5 right-[6px] flex h-[26px] w-5 flex-col items-center justify-end bg-[#83c84a]/80">
            <svg viewBox="0 0 20 26" className="h-full w-full" fill="none" stroke="#fff" strokeWidth="1.500"><path d="M6 9h7L9.500 4z" fill="#fff" /><path d="M2 22c4-8 10-8 6-2s6 2 6-4M12 14l5 8" /></svg>
          </div>
        </div>
        <div className="absolute bottom-0 right-0 h-0.5 w-[193px] bg-[repeating-linear-gradient(to_right,#d36a70_0_3px,#f4dcdc_3px_5px,#8b5257_5px_7px)]"></div>
      </div>
    </div>
  )
}

export default App
